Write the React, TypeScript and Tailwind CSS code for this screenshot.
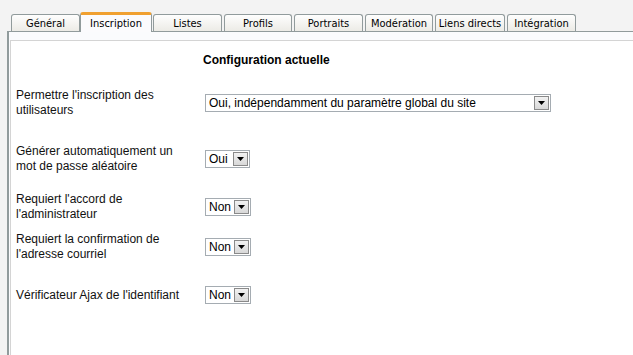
const tabs = [
  { label: "Général", cls: "w-[69px]" },
  { label: "Inscription", cls: "w-[72px]", active: true },
  { label: "Listes", cls: "w-[69px] ml-[1px]" },
  { label: "Profils", cls: "w-[68px] ml-[2px]" },
  { label: "Portraits", cls: "w-[69px] ml-[2px]" },
  { label: "Modération", cls: "w-[68px] ml-[2px]" },
  { label: "Liens directs", cls: "w-[70px] ml-[2px]" },
  { label: "Intégration", cls: "w-[69px] ml-[2px]" },
];

const rows = [
  { label: "Permettre l'inscription des utilisateurs", value: "Oui, indépendamment du paramètre global du site", width: "w-[346px]", gap: "mt-[20px]" },
  { label: "Générer automatiquement un mot de passe aléatoire", value: "Oui", width: "w-[45px]", gap: "mt-[26px]" },
  { label: "Requiert l'accord de l'administrateur", value: "Non", width: "w-[46px]", gap: "mt-[18px]" },
  { label: "Requiert la confirmation de l'adresse courriel", value: "Non", width: "w-[46px]", gap: "mt-[10px]" },
  { label: "Vérificateur Ajax de l'identifiant", value: "Non", width: "w-[46px]", gap: "mt-[18px]" },
];

const Select = ({ value, width }: { value: string; width: string }) => (
  <div className={`${width} h-[18px] border border-[#a5acb2] bg-white flex items-center justify-between pl-[3px] pr-[1px]`}>
    <span className="text-[12px] leading-none text-black whitespace-nowrap">{value}</span>
    <span className="w-[15px] h-[14px] border border-[#8a8a8a] bg-gradient-to-b from-[#f2f2f2] to-[#d8d8d8] flex items-center justify-center">
      <svg width="7" height="4" viewBox="0 0 7 4">
        <path d="M0 0h7L3.5 4z" fill="#000" />
      </svg>
    </span>
  </div>
);

const App = () => {
  return (
    <div className="w-[633px] h-[355px] overflow-hidden bg-[#f3f3f3] font-['Liberation_Sans',Arial,sans-serif]">
      <div className="flex items-end pl-[11px] pt-[12px] h-[31px] relative z-10 font-['DejaVu_Sans_Condensed','DejaVu_Sans',sans-serif] text-[11px]">
        {tabs.map(tab =>
          tab.active ? (
            <div key={tab.label} className={`${tab.cls} h-[20px] -mb-[1px] border-t-[3px] border-x border-t-[#f0a030] border-x-[#919b9c] rounded-t-[3px] bg-[#fbfbfd] flex items-start justify-center pt-[1px] text-black`}>
              {tab.label}
            </div>
          ) : (
            <div key={tab.label} className={`${tab.cls} h-[17px] border border-b-0 border-[#919b9c] rounded-t-[3px] bg-gradient-to-b from-[#fefefe] to-[#ecebe6] flex items-center justify-center pt-[2px] text-black`}>
              {tab.label}
            </div>
          )
        )}
      </div>
      <div className="ml-[7px] border-l-2 border-t border-[#919b9c] bg-[#fafbfd] pt-[8px] h-[324px]">
        <div className="ml-[1px] border-t border-l border-[#d4d4d4] bg-white h-full pt-[12px]">
          <h2 className="text-[12px] font-bold text-black leading-[15px] pl-[192px]">Configuration actuelle</h2>
          {rows.map(row =>
            <div key={row.label} className={`${row.gap} flex items-center h-[30px]`}>
              <p className="w-[194px] pl-[5px] pr-[16px] text-[12px] leading-[15px] text-[#111]">{row.label}</p>
              <Select value={row.value} width={row.width} />
            </div>
          )}
        </div>
      </div>
    </div>
  );
};

export default App;
